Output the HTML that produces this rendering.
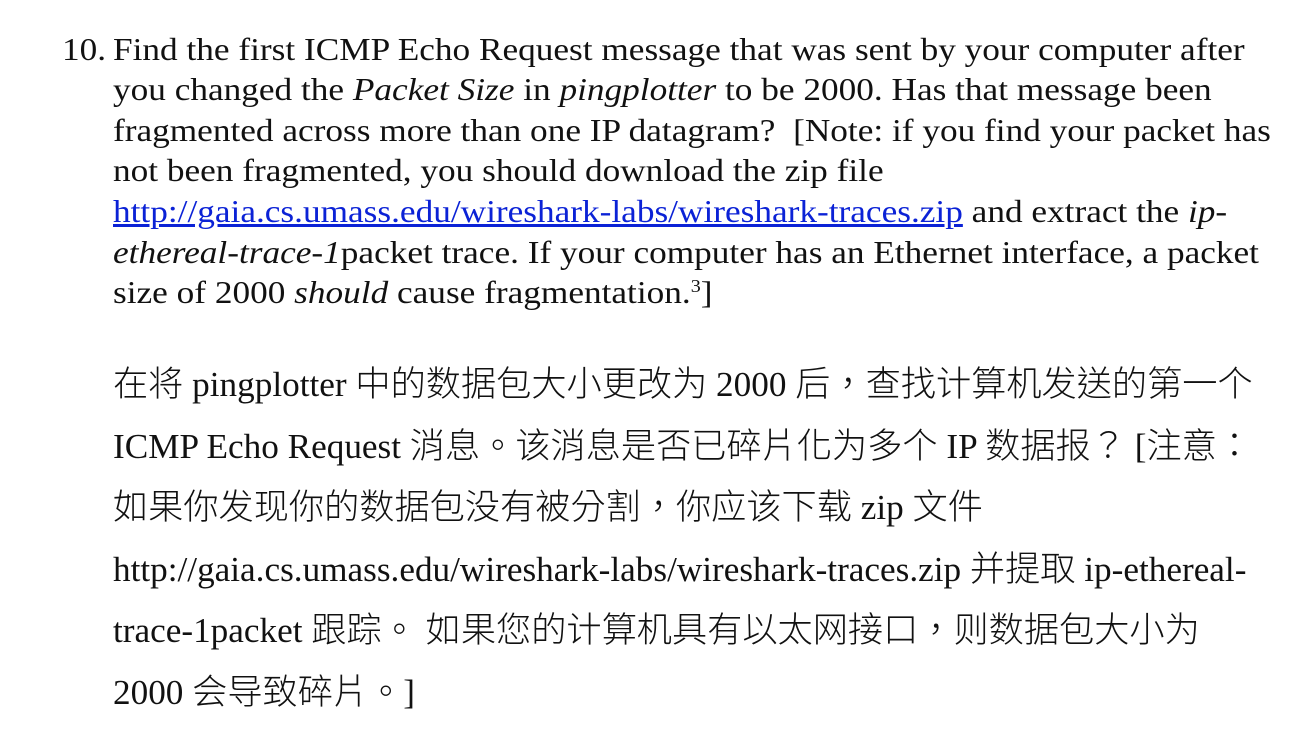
<!DOCTYPE html>
<html><head><meta charset="utf-8"><style>
html,body{margin:0;padding:0;background:#fff;width:1307px;height:744px;overflow:hidden}
.en{position:absolute;left:113px;top:29.6px;font-family:"Liberation Serif",serif;font-size:31.6px;line-height:40.6px;color:#111;white-space:nowrap;transform:scaleX(1.116);transform-origin:0 0}
.num{position:absolute;left:62px;top:29.6px;font-family:"Liberation Serif",serif;font-size:31.6px;line-height:40.6px;color:#111;transform:scaleX(1.116);transform-origin:0 0}
a{color:#0b22d6;text-decoration:underline}
.zh{position:absolute;left:113px;top:354px;font-family:"Liberation Serif","Noto Sans CJK TC",sans-serif;font-size:35.2px;color:#111;white-space:nowrap;font-weight:300}
.zh div{height:61.5px;line-height:61.5px}
sup{font-size:18px;line-height:0;vertical-align:11px}
</style></head><body>
<div class="num">10.</div>
<div class="en">
<div>Find the first ICMP Echo Request message that was sent by your computer after</div>
<div>you changed the <i>Packet Size</i> in <i>pingplotter</i> to be 2000. Has that message been</div>
<div>fragmented across more than one IP datagram?&nbsp; [Note: if you find your packet has</div>
<div>not been fragmented, you should download the zip file</div>
<div><a>http://gaia.cs.umass.edu/wireshark-labs/wireshark-traces.zip</a> and extract the <i>ip-</i></div>
<div><i>ethereal-trace-1</i>packet trace. If your computer has an Ethernet interface, a packet</div>
<div>size of 2000 <i>should</i> cause fragmentation.<sup>3</sup>]</div>
</div>
<div class="zh">
<div>在将 pingplotter 中的数据包大小更改为 2000 后，查找计算机发送的第一个</div>
<div>ICMP Echo Request 消息。该消息是否已碎片化为多个 IP 数据报？ [注意：</div>
<div>如果你发现你的数据包没有被分割，你应该下载 zip 文件</div>
<div>http://gaia.cs.umass.edu/wireshark-labs/wireshark-traces.zip 并提取 ip-ethereal-</div>
<div>trace-1packet 跟踪。 如果您的计算机具有以太网接口，则数据包大小为</div>
<div>2000 会导致碎片。]</div>
</div>
</body></html>
